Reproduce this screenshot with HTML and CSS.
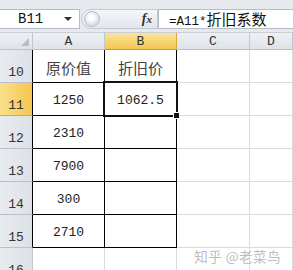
FILE: index.html
```html
<!DOCTYPE html>
<html lang="zh-CN">
<head>
  <meta charset="UTF-8">
  <title>折旧价</title>
  <link rel="stylesheet" href="styles.css">
</head>
<body>

<div class="formula-bar">
  <div class="name-box">
    <span class="num">B11</span>
    <span class="arrow"></span>
  </div>
  <div class="fx-area">
    <span class="grip"></span>
    <span class="fx">f<i>x</i></span>
  </div>
  <div class="formula"><span class="num">=A11*</span>折旧系数</div>
</div>

<div class="sheet">
  <!-- 表头 -->
  <div class="corner"><span class="tri"></span></div>
  <div class="col-head">A</div>
  <div class="col-head active">B</div>
  <div class="col-head">C</div>
  <div class="col-head">D</div>

  <div class="row-head in-table">10</div>
  <div class="cell tb title">原价值</div>
  <div class="cell tb title">折旧价</div>
  <div class="cell"></div>
  <div class="cell"></div>

  <div class="row-head in-table active">11</div>
  <div class="cell tb num">1250</div>
  <div class="cell tb num selected">1062.5<span class="handle"></span></div>
  <div class="cell"></div>
  <div class="cell"></div>

  <div class="row-head in-table">12</div>
  <div class="cell tb num">2310</div>
  <div class="cell tb"></div>
  <div class="cell"></div>
  <div class="cell"></div>

  <div class="row-head in-table">13</div>
  <div class="cell tb num">7900</div>
  <div class="cell tb"></div>
  <div class="cell"></div>
  <div class="cell"></div>

  <div class="row-head in-table">14</div>
  <div class="cell tb num">300</div>
  <div class="cell tb"></div>
  <div class="cell"></div>
  <div class="cell"></div>

  <div class="row-head in-table">15</div>
  <div class="cell tb num">2710</div>
  <div class="cell tb"></div>
  <div class="cell"></div>
  <div class="cell"></div>

  <div class="row-head">16</div>
  <div class="cell"></div>
  <div class="cell"></div>
  <div class="cell"></div>
  <div class="cell"></div>

  <div class="watermark">知乎 @老菜鸟</div>
</div>

</body>
</html>
```

FILE: styles.css
```css
body {
  margin: 0;
  width: 293px;
  height: 270px;
  overflow: hidden;
  background: #fff;
  font-family: "Noto Sans CJK SC", sans-serif;
  color: #222;
}
.num {
  font-family: "Liberation Mono", monospace;
  font-size: 13px;
}

/* 编辑栏 */
.formula-bar {
  display: flex;
  height: 33px;
  padding-top: 9px;
  box-sizing: border-box;
  background: #e6e9ee;
  border-bottom: 1px solid #c9ced6;
}
.name-box {
  width: 80px;
  height: 20px;
  box-sizing: border-box;
  background: #fff;
  border: 1px solid #b5bcc6;
  border-left: none;
  display: flex;
  align-items: center;
  padding-left: 18px;
}
.name-box .num {
  font-size: 14px;
  color: #111;
  flex: 1;
}
.arrow {
  width: 0;
  height: 0;
  margin-right: 7px;
  border-left: 4px solid transparent;
  border-right: 4px solid transparent;
  border-top: 4px solid #333;
}
.fx-area {
  width: 77px;
  height: 20px;
  box-sizing: border-box;
  margin-left: 1px;
  display: flex;
  align-items: center;
  justify-content: space-between;
  background: linear-gradient(#f4f6f9, #e2e6ec);
  border: 1px solid #c3c9d2;
  border-radius: 10px 0 0 10px;
}
.grip {
  width: 14px;
  height: 14px;
  margin-left: 2px;
  border-radius: 50%;
  background: radial-gradient(circle at 45% 40%, #fff 20%, #d3d8df 75%);
  border: 1px solid #b9bfc8;
}
.fx {
  font-family: "Liberation Serif", serif;
  font-style: italic;
  font-weight: bold;
  font-size: 14px;
  color: #333;
  margin-right: 5px;
}
.fx i {
  font-size: 11px;
}
.formula {
  flex: 1;
  height: 20px;
  box-sizing: border-box;
  background: #fff;
  border: 1px solid #b5bcc6;
  border-right: none;
  padding-left: 10px;
  font-size: 15px;
  line-height: 18px;
  color: #111;
  white-space: nowrap;
}
.formula .num {
  font-size: 12.5px;
}

/* 表格 */
.sheet {
  position: relative;
  display: grid;
  grid-template-columns: 33px 72px 72px 73px 43px;
  grid-template-rows: 17px repeat(7, 33px);
}
.corner,
.col-head,
.row-head {
  box-sizing: border-box;
  background: linear-gradient(#eef0f3, #dfe3e8);
  border-right: 1px solid #c2c8d1;
  border-bottom: 1px solid #b9c0ca;
  font-family: "Liberation Mono", monospace;
  font-size: 13px;
  color: #333;
}
.corner {
  position: relative;
}
.tri {
  position: absolute;
  right: 3px;
  bottom: 3px;
  width: 0;
  height: 0;
  border-left: 8px solid transparent;
  border-bottom: 8px solid #b8bec7;
}
.col-head {
  display: flex;
  align-items: center;
  justify-content: center;
}
.row-head {
  display: flex;
  align-items: flex-end;
  justify-content: center;
  padding-bottom: 2px;
  background: linear-gradient(90deg, #e8ebef, #dde1e7);
}
.col-head.active {
  background: linear-gradient(#fae49a, #f5c550);
  border-right-color: #d9a93a;
  border-bottom-color: #c89a2c;
}
.row-head.active {
  background: linear-gradient(90deg, #fae08a, #f5c550);
  border-bottom-color: #d9a93a;
}
.row-head.in-table {
  border-right-color: #000;
}
.cell {
  position: relative;
  box-sizing: border-box;
  border-right: 1px solid #dadada;
  border-bottom: 1px solid #dadada;
  display: flex;
  align-items: center;
  justify-content: center;
  padding-top: 3px;
}
.cell.tb {
  border-right-color: #000;
  border-bottom-color: #000;
}
.title {
  font-size: 15px;
  color: #444;
}
.selected::after {
  content: "";
  position: absolute;
  left: -2px;
  top: -2px;
  right: -2px;
  bottom: -2px;
  border: 2px solid #111;
  box-shadow: inset 0 0 0 1px #fff;
}
.handle {
  position: absolute;
  right: -4px;
  bottom: -4px;
  width: 5px;
  height: 5px;
  background: #111;
  border: 1px solid #fff;
  z-index: 1;
}
.watermark {
  position: absolute;
  right: 12px;
  bottom: 15px;
  font-size: 13.5px;
  color: #bdbdbd;
  letter-spacing: 0.5px;
  text-shadow: 0 0 2px #fff;
}
```
